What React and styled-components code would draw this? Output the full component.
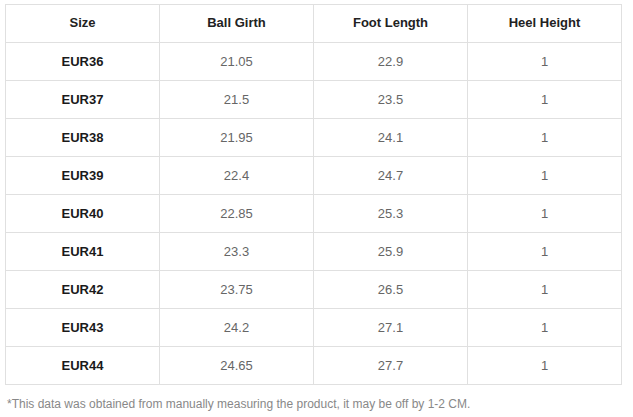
import React from "react";
import styled, { createGlobalStyle } from "styled-components";

const GlobalStyle = createGlobalStyle`
  body {
    margin: 0;
    background: #fff;
    font-family: "Liberation Sans", Arial, sans-serif;
  }
`;

const rows = [
  ["EUR36", "21.05", "22.9", "1"],
  ["EUR37", "21.5", "23.5", "1"],
  ["EUR38", "21.95", "24.1", "1"],
  ["EUR39", "22.4", "24.7", "1"],
  ["EUR40", "22.85", "25.3", "1"],
  ["EUR41", "23.3", "25.9", "1"],
  ["EUR42", "23.75", "26.5", "1"],
  ["EUR43", "24.2", "27.1", "1"],
  ["EUR44", "24.65", "27.7", "1"],
];

const Wrapper = styled.div`
  padding: 4px 11px 0 5px;
`;

const Table = styled.table`
  width: 617px;
  border-collapse: collapse;
  table-layout: fixed;
`;

const Th = styled.th`
  height: 35px;
  padding: 0 0 2px;
  border: 1px solid #e0e0e0;
  font-size: 13px;
  font-weight: bold;
  color: #222;
  text-align: center;
`;

const Td = styled.td`
  height: 37px;
  padding: 0;
  border: 1px solid #e0e0e0;
  font-size: 13px;
  text-align: center;
  font-weight: ${(p) => (p.$head ? "bold" : "normal")};
  color: ${(p) => (p.$head ? "#1a1a1a" : "#666")};
`;

const Note = styled.p`
  margin: 12px 0 0 2px;
  font-size: 12px;
  color: #888;
`;

export default function App() {
  return (
    <Wrapper>
      <GlobalStyle />
      <Table>
        <thead>
          <tr>
            <Th>Size</Th>
            <Th>Ball Girth</Th>
            <Th>Foot Length</Th>
            <Th>Heel Height</Th>
          </tr>
        </thead>
        <tbody>
          {rows.map((r) => (
            <tr key={r[0]}>
              {r.map((c, i) => (
                <Td key={i} $head={i === 0}>
                  {c}
                </Td>
              ))}
            </tr>
          ))}
        </tbody>
      </Table>
      <Note>
        *This data was obtained from manually measuring the product, it may be off by 1-2 CM.
      </Note>
    </Wrapper>
  );
}
